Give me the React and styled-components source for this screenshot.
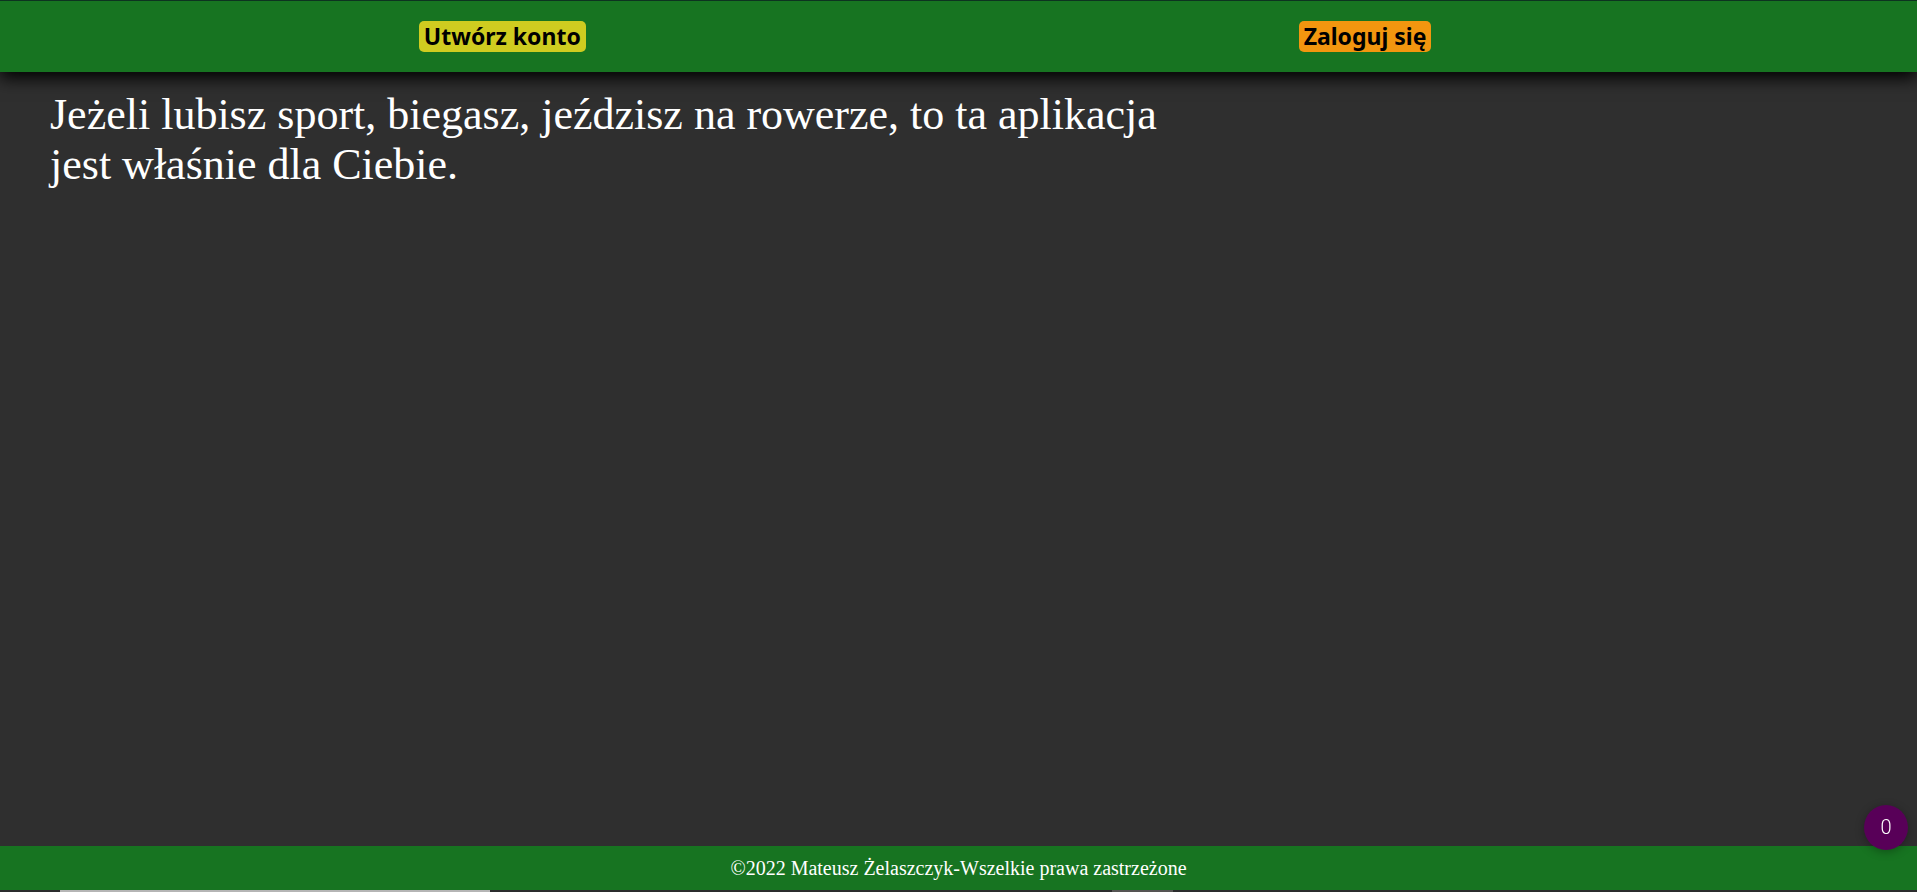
import React from "react";
import styled, { createGlobalStyle } from "styled-components";

const GlobalStyle = createGlobalStyle`
  * { box-sizing: border-box; }
  body {
    margin: 0;
    background: #2f2f2f;
    color: #ffffff;
    font-family: "Liberation Serif", "Times New Roman", serif;
  }
`;

const Page = styled.div`
  display: flex;
  flex-direction: column;
  min-height: 100vh;
`;

const Header = styled.header`
  border-top: 1px solid #0d3320;
  background: #177421;
  box-shadow: 0 6px 16px #000000;
`;

const Nav = styled.nav`
  display: grid;
  grid-template-columns: 1fr 1fr;
  width: 90%;
  margin-left: 71px;
  padding: 20px 0;
  justify-items: center;
`;

const NavButton = styled.button`
  height: 31px;
  padding: 0 5px;
  border: none;
  border-radius: 5px;
  background: ${({ $color }) => $color};
  color: #000000;
  font: bold 23px/31px "Noto Sans", sans-serif;
  white-space: nowrap;
  cursor: pointer;
`;

const Main = styled.main`
  flex: 1;
  padding: 18px 50px;
`;

const Intro = styled.p`
  max-width: 1150px;
  margin: 0;
  font-size: 44px;
  line-height: 50px;
`;

const Footer = styled.footer`
  padding: 11px 0;
  background: #177421;
  font-size: 20px;
  line-height: 22px;
  text-align: center;
`;

const EdgeStrip = styled.div`
  display: flex;
  height: 2px;
  padding-left: 60px;
  gap: 622px;
  background: #2b2c2d;
`;

const StripSegment = styled.span`
  width: ${({ $width }) => $width}px;
  background: ${({ $color }) => $color};
`;

const CounterButton = styled.button`
  position: fixed;
  right: 9px;
  bottom: 42px;
  width: 44px;
  height: 45px;
  padding: 0;
  border: none;
  border-radius: 50%;
  background: #580058;
  box-shadow: 0 2px 10px rgba(0, 0, 0, 0.3);
  color: #ffffff;
  font: 300 20px/45px Roboto, sans-serif;
  cursor: pointer;
`;

export default function App() {
  return (
    <>
      <GlobalStyle />
      <Page>
        <Header>
          <Nav>
            <NavButton type="button" $color="#cfcc20">Utwórz konto</NavButton>
            <NavButton type="button" $color="#f2960f">Zaloguj się</NavButton>
          </Nav>
        </Header>
        <Main>
          <Intro>
            Jeżeli lubisz sport, biegasz, jeździsz na rowerze, to ta aplikacja
            jest właśnie dla Ciebie.
          </Intro>
        </Main>
        <Footer>©2022 Mateusz Żelaszczyk-Wszelkie prawa zastrzeżone</Footer>
        <EdgeStrip>
          <StripSegment $width={430} $color="#b5b5b5" />
          <StripSegment $width={61} $color="#555453" />
        </EdgeStrip>
      </Page>
      <CounterButton type="button">0</CounterButton>
    </>
  );
}
